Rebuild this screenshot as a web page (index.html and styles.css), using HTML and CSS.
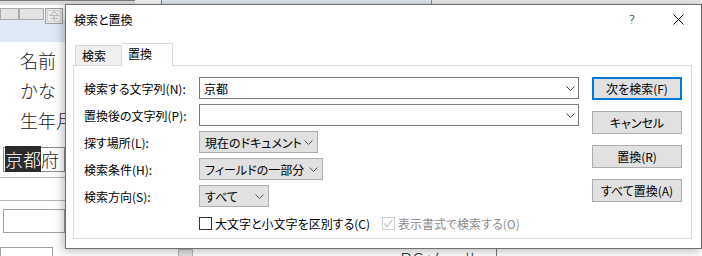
FILE: index.html
```html
<!DOCTYPE html>
<html lang="ja">
  <head>
    <meta charset="UTF-8" />
    <meta name="viewport" content="width=device-width, initial-scale=1.0" />
    <title>検索と置換</title>
    <link rel="stylesheet" href="styles.css">
  </head>
  <body>
    <!-- 後ろのフォーム画面 -->
    <div class="page">
      <div class="chrome">
        <span class="chrome-a"></span>
        <span class="chrome-b"></span>
        <span class="chrome-c"></span>
        <span class="chrome-d"></span>
      </div>
      <div class="toolrow">
        <span class="cell cell-1"></span>
        <span class="cell cell-2"></span>
        <span class="cell-btn">全</span>
      </div>
      <div class="band"></div>
      <ul class="labels">
        <li>名前</li>
        <li>かな</li>
        <li>生年月</li>
      </ul>
      <div class="addr"><span class="hl">京都</span>府</div>
      <div class="rule"></div>
      <div class="rule rule-2"></div>
      <div class="field-box"></div>
      <div class="bottomrow">
        <span class="bottom-box"></span>
        <span class="bottom-cell"></span>
        <span class="bottom-text">PCメール</span>
        <span class="bottom-line"></span>
      </div>
    </div>

    <!-- 検索と置換ダイアログ -->
    <div class="dialog">
      <div class="titlebar">
        <span class="title">検索と置換</span>
        <span class="tb-btn help">?</span>
        <span class="tb-btn">
          <svg width="11" height="11" viewBox="0 0 11 11"><path d="M0.5 0.5L10.5 10.5M10.5 0.5L0.5 10.5" stroke="#000" stroke-width="1" fill="none"/></svg>
        </span>
      </div>
      <div class="dlg-body">
        <div class="tabs">
          <span class="tab">検索</span>
          <span class="tab active">置換</span>
        </div>
        <div class="panel">
          <div class="form">
            <div class="row">
              <span class="label">検索する文字列(N):</span>
              <div class="combo">
                <span class="val">京都</span>
                <svg class="chev" width="9" height="5" viewBox="0 0 9 5"><path d="M0.5 0.5L4.5 4.5L8.5 0.5" stroke="#444" fill="none"/></svg>
              </div>
            </div>
            <div class="row">
              <span class="label">置換後の文字列(P):</span>
              <div class="combo">
                <span class="val"></span>
                <svg class="chev" width="9" height="5" viewBox="0 0 9 5"><path d="M0.5 0.5L4.5 4.5L8.5 0.5" stroke="#444" fill="none"/></svg>
              </div>
            </div>
            <div class="row">
              <span class="label">探す場所(L):</span>
              <div class="select sel-where">
                <span class="val">現在のドキュメント</span>
                <svg class="chev" width="9" height="5" viewBox="0 0 9 5"><path d="M0.5 0.5L4.5 4.5L8.5 0.5" stroke="#555" fill="none"/></svg>
              </div>
            </div>
            <div class="row">
              <span class="label">検索条件(H):</span>
              <div class="select sel-match">
                <span class="val">フィールドの一部分</span>
                <svg class="chev" width="9" height="5" viewBox="0 0 9 5"><path d="M0.5 0.5L4.5 4.5L8.5 0.5" stroke="#555" fill="none"/></svg>
              </div>
            </div>
            <div class="row">
              <span class="label">検索方向(S):</span>
              <div class="select sel-dir">
                <span class="val">すべて</span>
                <svg class="chev" width="9" height="5" viewBox="0 0 9 5"><path d="M0.5 0.5L4.5 4.5L8.5 0.5" stroke="#555" fill="none"/></svg>
              </div>
            </div>
            <div class="checks">
              <span class="check"><span class="box"></span>大文字と小文字を区別する(C)</span>
              <span class="check disabled">
                <span class="box">
                  <svg width="11" height="11" viewBox="0 0 11 11"><path d="M1.5 5.5L4 8.5L9.5 1.5" stroke="#c4c4c4" stroke-width="1.2" fill="none"/></svg>
                </span>表示書式で検索する(O)
              </span>
            </div>
          </div>
          <div class="buttons">
            <span class="btn default">次を検索(F)</span>
            <span class="btn">キャンセル</span>
            <span class="btn">置換(R)</span>
            <span class="btn">すべて置換(A)</span>
          </div>
        </div>
      </div>
    </div>
  </body>
</html>
```

FILE: styles.css
```css
* {
  margin: 0;
  padding: 0;
  box-sizing: border-box;
}

body {
  position: relative;
  width: 702px;
  height: 256px;
  overflow: hidden;
  background: #fff;
  color: #000;
  font-family: "Noto Sans CJK JP", "Liberation Sans", sans-serif;
}

/* ---- 後ろの画面 ---- */
.page {
  width: 702px;
  height: 256px;
  overflow: hidden;
}

.chrome {
  display: flex;
  height: 5px;
}

.chrome-a {
  width: 135px;
  background: #dcdcdc;
  border-top: 1px solid #7a7a7a;
}

.chrome-b {
  width: 27px;
  background: #f2f2f2;
  border-right: 1px solid #7a7a7a;
}

.chrome-c {
  width: 270px;
  background: #dfe4ec;
  border-right: 1px solid #8a8a8a;
}

.chrome-d {
  flex: 1;
  background: #e8e8e8;
}

.toolrow {
  display: flex;
  align-items: flex-start;
  height: 15px;
  padding-top: 3px;
  background: #fff;
}

.cell {
  height: 12px;
  background: #e3e3e3;
  border: 1px solid #a9a9a9;
}

.cell-1 {
  width: 19px;
}

.cell-2 {
  width: 25px;
}

.cell-btn {
  width: 18px;
  height: 16px;
  margin-left: 1px;
  border: 1px solid #9a9a9a;
  outline: 1px solid #d0d0d0;
  outline-offset: -3px;
  background: #ececec;
  color: #b0b0b0;
  font-size: 11px;
  line-height: 14px;
  text-align: center;
}

.band {
  height: 22px;
  background: #dfe8f5;
}

.labels {
  list-style: none;
  padding: 3px 0 0 20px;
}

.labels li {
  height: 30px;
  font-size: 18px;
  line-height: 30px;
  font-weight: 300;
  color: #222;
}

.addr {
  width: 62px;
  height: 25px;
  margin: 12px 0 0 3px;
  padding-left: 1px;
  border: 1px solid #8c8c8c;
  font-size: 18px;
  line-height: 23px;
  font-weight: 300;
  white-space: nowrap;
  color: #222;
}

.hl {
  background: #2b2b2b;
  color: #fff;
}

.rule {
  height: 1px;
  margin-top: 5px;
  background: #b4b4b4;
}

.rule-2 {
  margin-top: 22px;
}

.field-box {
  width: 62px;
  height: 24px;
  margin: 8px 0 0 3px;
  border: 1px solid #a0a0a0;
}

.bottomrow {
  display: flex;
  align-items: flex-start;
  height: 10px;
  margin-top: 14px;
}

.bottom-box {
  width: 53px;
  height: 10px;
  border: 1px solid #a0a0a0;
  border-bottom: none;
}

.bottom-cell {
  width: 15px;
  height: 8px;
  margin: 2px 0 0 125px;
  background: #e2e2e2;
  border: 1px solid #b4b4b4;
  border-bottom: none;
}

.bottom-text {
  height: 8px;
  margin: 2px 0 0 207px;
  font-size: 19px;
  line-height: 19px;
  font-weight: 300;
  color: #333;
  white-space: nowrap;
  overflow: hidden;
}

.bottom-line {
  width: 1px;
  height: 10px;
  margin-left: 15px;
  background: #777;
}

/* ---- ダイアログ ---- */
.dialog {
  position: absolute;
  left: 65px;
  top: 4px;
  width: 637px;
  height: 245px;
  background: #fff;
  border: 1px solid #707070;
  box-shadow: -2px 2px 9px rgba(0, 0, 0, 0.28);
  font-size: 12px;
  font-feature-settings: "palt";
}

.titlebar {
  display: flex;
  align-items: center;
  height: 28px;
  padding-left: 8px;
}

.title {
  flex: 1;
  font-size: 12px;
}

.tb-btn {
  display: flex;
  align-items: center;
  justify-content: center;
  width: 46px;
  height: 28px;
}

.help {
  font-family: "DejaVu Sans", sans-serif;
  font-size: 13px;
  font-weight: 300;
}

.dlg-body {
  padding: 10px 9px 9px 7px;
}

.tabs {
  display: flex;
  align-items: flex-end;
  height: 22px;
  padding-left: 2px;
}

.tab {
  width: 47px;
  height: 20px;
  padding-left: 6px;
  background: #f0f0f0;
  border: 1px solid #d9d9d9;
  border-bottom: none;
  line-height: 20px;
}

.tab.active {
  position: relative;
  width: 51px;
  height: 23px;
  margin-bottom: -1px;
  padding-left: 6px;
  background: #fff;
  border-left: none;
  line-height: 19px;
}

.panel {
  display: flex;
  height: 174px;
  padding: 11px 9px 0 10px;
  border: 1px solid #d9d9d9;
}

.form {
  display: flex;
  flex-direction: column;
  gap: 5px;
  width: 495px;
}

.row {
  display: flex;
  align-items: center;
  height: 22px;
}

.label {
  width: 115px;
}

.combo,
.select {
  display: flex;
  align-items: center;
  height: 22px;
  padding: 0 3px 0 4px;
  border: 1px solid #7a7a7a;
}

.combo {
  width: 380px;
}

.select {
  padding: 0 4px 0 5px;
  background: #e1e1e1;
  border-color: #adadad;
}

.sel-where {
  width: 119px;
}

.sel-match {
  width: 124px;
}

.sel-dir {
  width: 70px;
}

.val {
  flex: 1;
  min-width: 0;
  white-space: nowrap;
  overflow: hidden;
}

.chev {
  flex: none;
  margin-left: 2px;
}

.checks {
  display: flex;
  gap: 12px;
  margin: 3px 0 0 115px;
}

.check {
  display: flex;
  align-items: center;
  gap: 3px;
  white-space: nowrap;
}

.check .box {
  display: flex;
  align-items: center;
  justify-content: center;
  width: 13px;
  height: 13px;
  border: 1px solid #333;
  background: #fff;
}

.check.disabled {
  color: #8c8c8c;
}

.check.disabled .box {
  border-color: #cccccc;
}

.buttons {
  display: flex;
  flex-direction: column;
  gap: 11px;
  width: 90px;
  margin-left: 13px;
}

.btn {
  display: flex;
  align-items: center;
  justify-content: center;
  height: 23px;
  background: #e1e1e1;
  border: 1px solid #adadad;
}

.btn.default {
  border: 2px solid #0078d7;
}
```
